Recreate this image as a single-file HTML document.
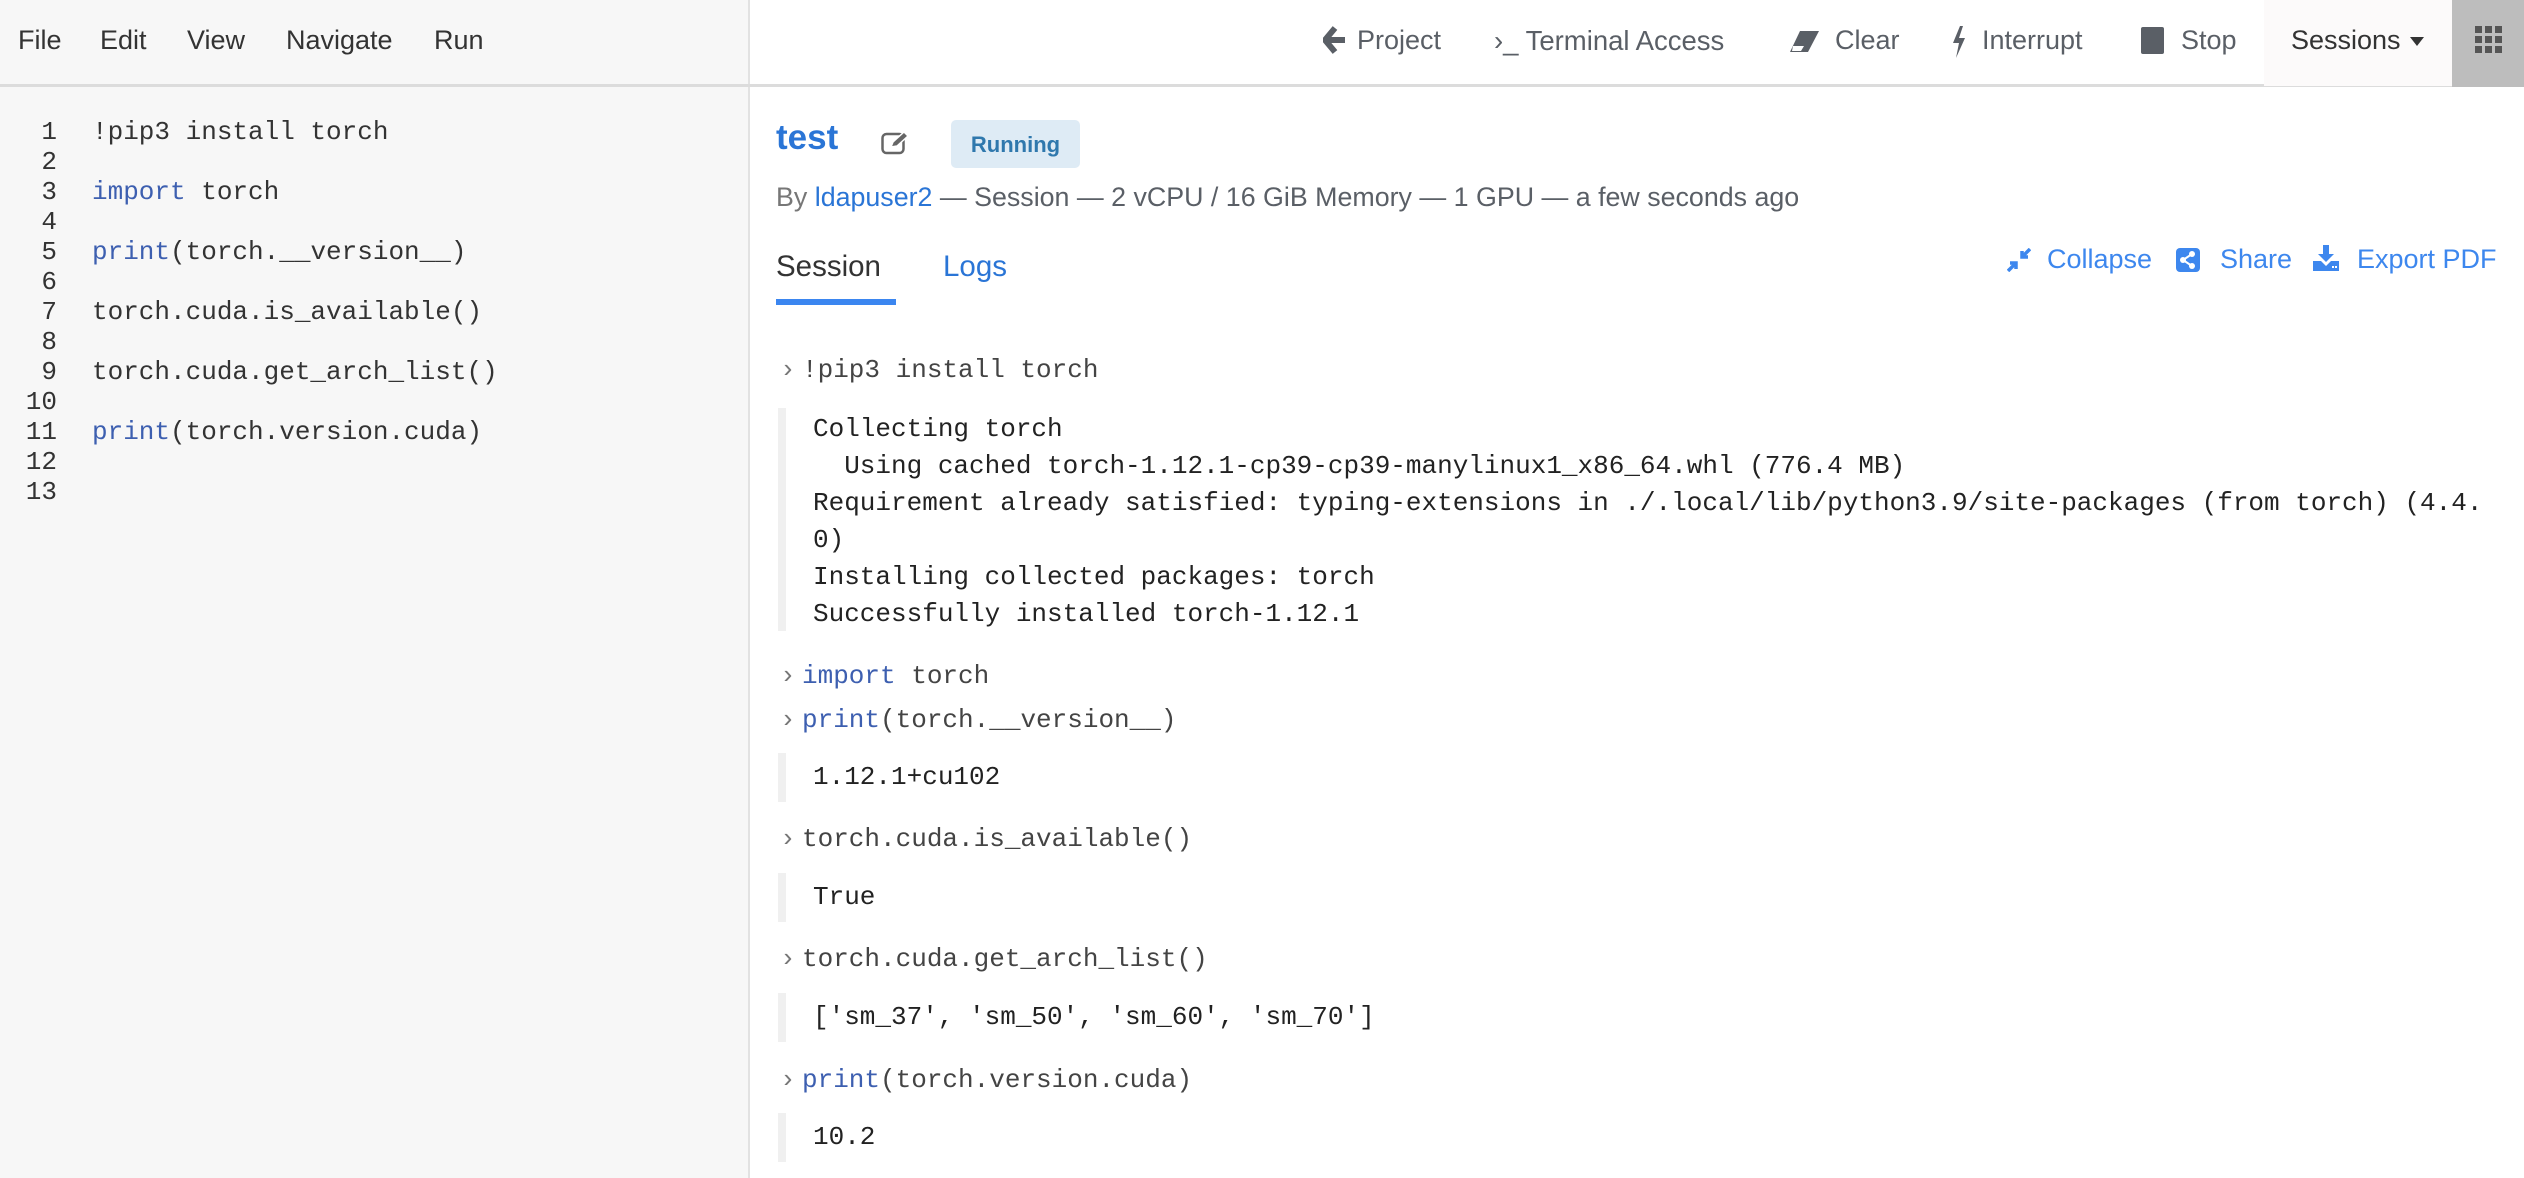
<!DOCTYPE html>
<html><head><meta charset="utf-8"><style>
*{margin:0;padding:0;box-sizing:border-box}
body{width:2524px;height:1178px;overflow:hidden;background:#fff;font-family:"Liberation Sans",sans-serif;position:relative}
.left{position:absolute;left:0;top:0;width:750px;height:1178px;background:#f7f7f7;border-right:2px solid #e2e2e2}
.hdr{position:absolute;left:0;top:0;width:2524px;height:87px;border-bottom:3px solid #dcdcdc}
.menu{position:absolute;top:25px;font-size:27px;color:#333}
.act{position:absolute;top:25px;font-size:27px;color:#5a5f66;white-space:nowrap}
.code{position:absolute;font-family:"Liberation Mono",monospace;font-size:26px;color:#333;white-space:pre}
.ln{position:absolute;left:0;width:57px;text-align:right;font-family:"Liberation Mono",monospace;font-size:26px;color:#333}
.kw{color:#3d5fb0}
.out{position:absolute;left:778px;border-left:8px solid #f0f0f0;font-family:"Liberation Mono",monospace;font-size:26px;color:#222;white-space:pre;line-height:37px;padding-left:27px}
.pr{position:absolute;left:780px;font-family:"Liberation Mono",monospace;font-size:26px;color:#777}
.blue{color:#2a75d6}
.link{position:absolute;top:244px;font-size:27px;color:#3d87ee;white-space:nowrap}
</style></head><body>
<div class="left"></div>
<div class="hdr"></div>
<div style="position:absolute;left:2452px;top:0;width:72px;height:87px;background:#bdbdbd"></div>
<div style="position:absolute;left:2264px;top:0;width:188px;height:86px;background:#fcfafa"></div>
<svg style="position:absolute;left:2475px;top:26px" width="27" height="27" viewBox="0 0 27 27" fill="#555"><rect x="0" y="0" width="7" height="7"/><rect x="10" y="0" width="7" height="7"/><rect x="20" y="0" width="7" height="7"/><rect x="0" y="10" width="7" height="7"/><rect x="10" y="10" width="7" height="7"/><rect x="20" y="10" width="7" height="7"/><rect x="0" y="20" width="7" height="7"/><rect x="10" y="20" width="7" height="7"/><rect x="20" y="20" width="7" height="7"/></svg>

<div class="menu" style="left:18px">File</div>
<div class="menu" style="left:100px">Edit</div>
<div class="menu" style="left:187px">View</div>
<div class="menu" style="left:286px">Navigate</div>
<div class="menu" style="left:434px">Run</div>

<svg style="position:absolute;left:1323px;top:26px" width="24" height="28" viewBox="0 0 24 28"><path d="M12 2 L2 14 L12 26 M3 14 H22" stroke="#5a5f66" stroke-width="6" fill="none" stroke-linejoin="round"/></svg>
<div class="act" style="left:1357px">Project</div>
<div class="act" style="left:1494px;font-size:27.5px">›_ Terminal Access</div>
<svg style="position:absolute;left:1788px;top:30px" width="32" height="24" viewBox="0 0 32 24"><path d="M12 1 H31 L20 22 H2 Z" fill="#5a5f66"/><path d="M5 16 H16 L13 21 H4 Z" fill="#fff"/></svg>
<div class="act" style="left:1835px">Clear</div>
<svg style="position:absolute;left:1951px;top:26px" width="16" height="32" viewBox="0 0 16 32"><path d="M9 0 L2 17 H8 L5 32 L14 12 H8 L12 0 Z" fill="#5a5f66"/></svg>
<div class="act" style="left:1982px">Interrupt</div>
<div style="position:absolute;left:2141px;top:27px;width:23px;height:27px;background:#5a5f66;border-radius:2px"></div>
<div class="act" style="left:2181px">Stop</div>
<div class="act" style="left:2291px;color:#333">Sessions</div>
<svg style="position:absolute;left:2410px;top:37px" width="14" height="10"><path d="M0 0 H14 L7 9 Z" fill="#333"/></svg>

<!-- code editor -->
<div class="ln" style="top:117px">1</div><div class="code" style="left:92px;top:117px">!pip3 install torch</div>
<div class="ln" style="top:147px">2</div>
<div class="ln" style="top:177px">3</div><div class="code" style="left:92px;top:177px"><span class="kw">import</span> torch</div>
<div class="ln" style="top:207px">4</div>
<div class="ln" style="top:237px">5</div><div class="code" style="left:92px;top:237px"><span class="kw">print</span>(torch.__version__)</div>
<div class="ln" style="top:267px">6</div>
<div class="ln" style="top:297px">7</div><div class="code" style="left:92px;top:297px">torch.cuda.is_available()</div>
<div class="ln" style="top:327px">8</div>
<div class="ln" style="top:357px">9</div><div class="code" style="left:92px;top:357px">torch.cuda.get_arch_list()</div>
<div class="ln" style="top:387px">10</div>
<div class="ln" style="top:417px">11</div><div class="code" style="left:92px;top:417px"><span class="kw">print</span>(torch.version.cuda)</div>
<div class="ln" style="top:447px">12</div>
<div class="ln" style="top:477px">13</div>

<!-- right -->
<div style="position:absolute;left:776px;top:118px;font-size:35px;font-weight:bold;color:#2a75d6">test</div>
<svg style="position:absolute;left:881px;top:131px" width="30" height="24" viewBox="0 0 30 24"><rect x="1.5" y="3" width="21" height="19" rx="4" fill="none" stroke="#666" stroke-width="2.5"/><path d="M10 16 L12 11 L23 1 L27 5 L16 15 Z" fill="#666" stroke="#fff" stroke-width="1.5"/></svg>
<div style="position:absolute;left:951px;top:120px;width:129px;height:48px;background:#deebf5;border-radius:5px;color:#2f78ad;font-weight:bold;font-size:22px;text-align:center;line-height:50px">Running</div>
<div style="position:absolute;left:776px;top:182px;font-size:26.8px;color:#5a5f66;white-space:nowrap"><span style="color:#777">By</span> <span class="blue">ldapuser2</span> — Session — 2 vCPU / 16 GiB Memory — 1 GPU — a few seconds ago</div>
<div style="position:absolute;left:776px;top:250px;font-size:29.5px;color:#333">Session</div>
<div style="position:absolute;left:943px;top:250px;font-size:29.5px;color:#2a75d6">Logs</div>
<div style="position:absolute;left:776px;top:299px;width:120px;height:6px;background:#3b86f0"></div>

<svg style="position:absolute;left:2007px;top:248px" width="24" height="24" viewBox="0 0 24 24"><path d="M23 1 L15 9 M15 3 V9 H21 M1 23 L9 15 M3 15 H9 V21" stroke="#3d87ee" stroke-width="3.5" fill="none"/></svg>
<div class="link" style="left:2047px">Collapse</div>
<svg style="position:absolute;left:2176px;top:248px" width="24" height="24" viewBox="0 0 24 24"><rect width="24" height="24" rx="4" fill="#3d87ee"/><circle cx="16" cy="6" r="3" fill="#fff"/><circle cx="16" cy="18" r="3" fill="#fff"/><circle cx="7" cy="12" r="3" fill="#fff"/><path d="M16 6 L7 12 L16 18" stroke="#fff" stroke-width="2" fill="none"/></svg>
<div class="link" style="left:2220px">Share</div>
<svg style="position:absolute;left:2313px;top:245px" width="26" height="26" viewBox="0 0 26 26"><path d="M10 0 H16 V9 H21 L13 17 L5 9 H10 Z" fill="#3d87ee"/><path d="M0 16 H8 L13 21 L18 16 H26 V26 H0 Z" fill="#3d87ee"/><rect x="19" y="21" width="2" height="2" fill="#fff"/><rect x="22" y="21" width="2" height="2" fill="#fff"/></svg>
<div class="link" style="left:2357px">Export PDF</div>

<!-- cells -->
<div class="pr" style="top:355px">›</div>
<div class="code" style="left:802px;top:355px;color:#444">!pip3 install torch</div>
<div class="out" style="top:408px;height:223px;padding-top:3px">Collecting torch
  Using cached torch-1.12.1-cp39-cp39-manylinux1_x86_64.whl (776.4 MB)
Requirement already satisfied: typing-extensions in ./.local/lib/python3.9/site-packages (from torch) (4.4.
0)
Installing collected packages: torch
Successfully installed torch-1.12.1</div>

<div class="pr" style="top:661px">›</div>
<div class="code" style="left:802px;top:661px;color:#444"><span class="kw">import</span> torch</div>
<div class="pr" style="top:705px">›</div>
<div class="code" style="left:802px;top:705px;color:#444"><span class="kw">print</span>(torch.__version__)</div>
<div class="out" style="top:753px;height:49px;padding-top:6px">1.12.1+cu102</div>

<div class="pr" style="top:824px">›</div>
<div class="code" style="left:802px;top:824px;color:#444">torch.cuda.is_available()</div>
<div class="out" style="top:873px;height:49px;padding-top:6px">True</div>

<div class="pr" style="top:944px">›</div>
<div class="code" style="left:802px;top:944px;color:#444">torch.cuda.get_arch_list()</div>
<div class="out" style="top:993px;height:49px;padding-top:6px">['sm_37', 'sm_50', 'sm_60', 'sm_70']</div>

<div class="pr" style="top:1065px">›</div>
<div class="code" style="left:802px;top:1065px;color:#444"><span class="kw">print</span>(torch.version.cuda)</div>
<div class="out" style="top:1113px;height:49px;padding-top:6px">10.2</div>
</body></html>
